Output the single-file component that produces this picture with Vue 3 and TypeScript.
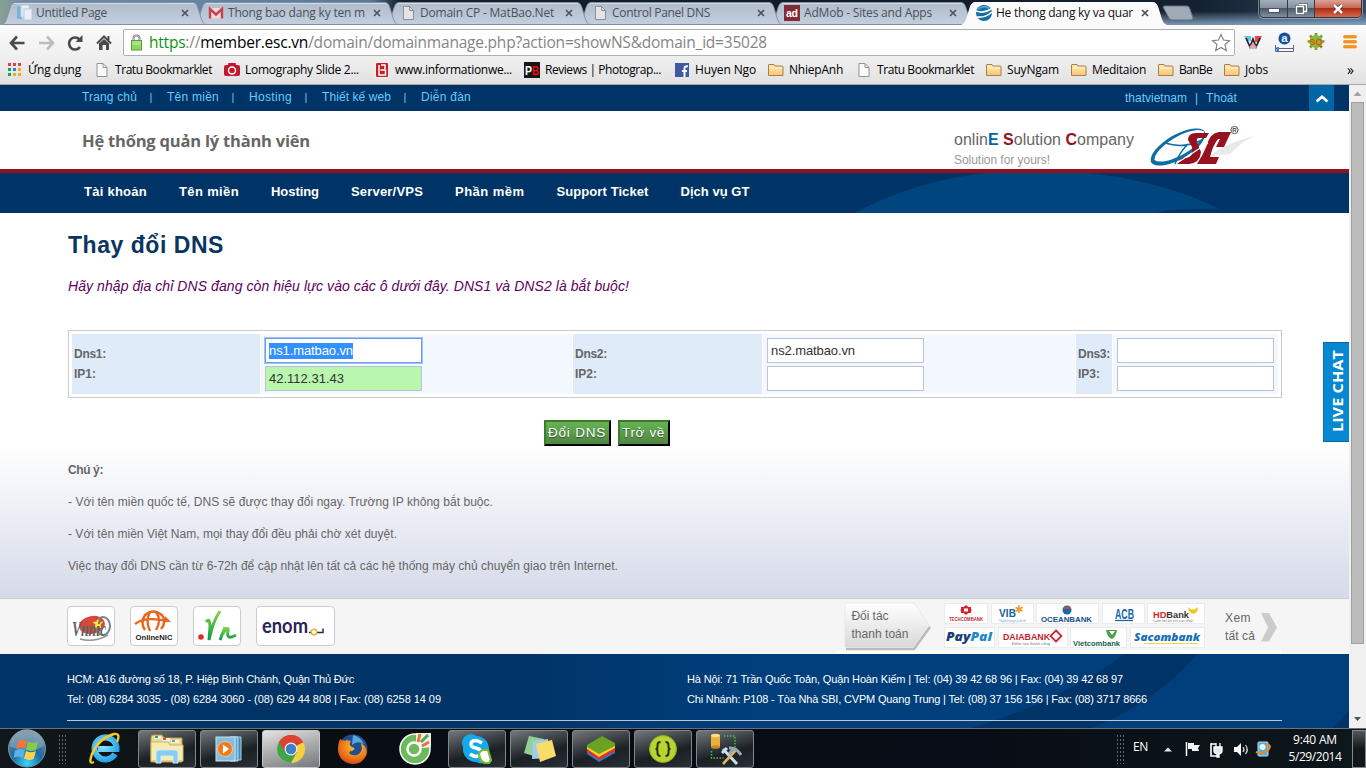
<script setup lang="ts">
import type { Directive } from 'vue'

interface Bookmark { icon: string; label: string; w: number; pad?: number }
interface Tab { icon: string; label: string; w: number; active?: boolean }
interface Link { label: string; w: number }

// Tracks a label out or in so that it fills the given width in pixels.
const vFit: Directive<HTMLElement, number> = {
  mounted(el, { value }) {
    const natural = el.getBoundingClientRect().width
    const count = (el.textContent ?? '').trim().length
    if (count > 1) el.style.letterSpacing = `${(value - natural) / count}px`
  },
}

const tabs: Tab[] = [
  { icon: 'pages', label: 'Untitled Page', w: 71 },
  { icon: 'gmail', label: 'Thong bao dang ky ten m', w: 137 },
  { icon: 'doc', label: 'Domain CP - MatBao.Net', w: 134 },
  { icon: 'doc', label: 'Control Panel DNS', w: 98 },
  { icon: 'ad', label: 'AdMob - Sites and Apps', w: 128 },
  { icon: 'globe', label: 'He thong dang ky va quar', w: 137, active: true },
]
const bookmarks: Bookmark[] = [
  { icon: 'apps', label: 'Ứng dụng', w: 53, pad: 1 },
  { icon: 'doc', label: 'Tratu Bookmarklet', w: 97 },
  { icon: 'camera', label: 'Lomography Slide 2...', w: 114, pad: 3 },
  { icon: 'redb', label: 'www.informationwe...', w: 117 },
  { icon: 'pb', label: 'Reviews | Photograp...', w: 116, pad: 1 },
  { icon: 'fb', label: 'Huyen Ngo', w: 61 },
  { icon: 'folder', label: 'NhiepAnh', w: 54, pad: 1 },
  { icon: 'doc', label: 'Tratu Bookmarklet', w: 97 },
  { icon: 'folder', label: 'SuyNgam', w: 52 },
  { icon: 'folder', label: 'Meditaion', w: 54 },
  { icon: 'folder', label: 'BanBe', w: 33 },
  { icon: 'folder', label: 'Jobs', w: 23 },
]
const topLinks: Link[] = [
  { label: 'Trang chủ', w: 55 },
  { label: 'Tên miền', w: 52 },
  { label: 'Hosting', w: 43 },
  { label: 'Thiết kế web', w: 69 },
  { label: 'Diễn đàn', w: 50 },
]
const nav: Link[] = [
  { label: 'Tài khoản', w: 63 },
  { label: 'Tên miền', w: 60 },
  { label: 'Hosting', w: 48 },
  { label: 'Server/VPS', w: 72 },
  { label: 'Phần mềm', w: 69.5 },
  { label: 'Support Ticket', w: 92 },
  { label: 'Dịch vụ GT', w: 69 },
]
const notes: Link[] = [
  { label: '- Với tên miền quốc tế, DNS sẽ được thay đổi ngay. Trường IP không bắt buộc.', w: 425 },
  { label: '- Với tên miền Việt Nam, mọi thay đổi đều phải chờ xét duyệt.', w: 329 },
  { label: 'Việc thay đổi DNS cần từ 6-72h để cập nhật lên tất cả các hệ thống máy chủ chuyển giao trên Internet.', w: 550 },
]
const tasks = ['start', 'ie', 'explorer', 'player', 'chrome', 'firefox', 'coccoc', 'skype', 'sticky', 'stacks', 'braces', 'tools']
const open = ['explorer', 'player', 'chrome', 'skype', 'sticky', 'stacks', 'braces', 'tools']
</script>

<template>
  <div class="screen">
    <svg class="defs" width="0" height="0">
      <defs>
        <linearGradient id="tabFill" x1="0" y1="0" x2="0" y2="1"><stop offset="0" stop-color="#b1bccb" /><stop offset="1" stop-color="#c3cfde" /></linearGradient>
        <linearGradient id="folderFill" x1="0" y1="0" x2="0" y2="1"><stop offset="0" stop-color="#ffeab8" /><stop offset="1" stop-color="#f7c672" /></linearGradient>
        <linearGradient id="leaf" x1="0" y1="0" x2="0" y2="1"><stop offset="0" stop-color="#8bd24a" /><stop offset="1" stop-color="#0d9b4b" /></linearGradient>
        <radialGradient id="orb" cx=".5" cy=".9" r=".8"><stop offset="0" stop-color="#38d6ff" /><stop offset=".5" stop-color="#1b6ba3" /><stop offset="1" stop-color="#6b8698" /></radialGradient>
        <radialGradient id="iefill" cx=".4" cy=".4" r=".7"><stop offset="0" stop-color="#8fe6ff" /><stop offset="1" stop-color="#25a5e6" /></radialGradient>
        <radialGradient id="ffox" cx=".6" cy=".3" r=".8"><stop offset="0" stop-color="#ffc928" /><stop offset=".6" stop-color="#ef7419" /><stop offset="1" stop-color="#c93a12" /></radialGradient>
        <linearGradient id="tagFill" x1="0" y1="0" x2="0" y2="1"><stop offset="0" stop-color="#ffffff" /><stop offset="1" stop-color="#d9d9d9" /></linearGradient>
      </defs>
    </svg>

    <!-- Tab strip -->
    <div class="strip">
      <div v-for="(t, i) in tabs" :key="t.label" class="tab" :class="{ active: t.active }" :style="{ zIndex: t.active ? 20 : 10 - i }">
        <svg class="tab-shape" width="204" height="25" viewBox="0 0 204 25">
          <path d="M0 24.5 C4 24 5 17 8 8 C9.5 3 11 2.5 14 2.5 H190 C193 2.5 194.5 3 196 8 C199 17 200 24 204 24.5Z" :fill="t.active ? '#fbfbfb' : 'url(#tabFill)'" :stroke="t.active ? '#fbfbfb' : '#8390a0'" />
          <path v-if="!t.active" d="M12 3.5 H192" stroke="#d3dce6" fill="none" />
        </svg>
        <div class="tab-body">
          <svg width="16" height="16" viewBox="0 0 16 16" class="tab-icon">
            <g v-if="t.icon === 'pages'"><rect x="1" y="1" width="5" height="13" fill="#7ab2dd" /><rect x="5" y="0" width="8" height="12" fill="#e4edf4" stroke="#c2d0dc" /><rect x="8" y="4" width="8" height="11" fill="#e9eff5" stroke="#bccad6" /></g>
            <g v-else-if="t.icon === 'gmail'"><rect x="1" y="3" width="14" height="10.500" fill="#ead9d9" /><path d="M2 13.500 V4 L8 9.500 L14 4 V13.500" fill="none" stroke="#c5434a" stroke-width="2.400" /></g>
            <g v-else-if="t.icon === 'doc'"><path d="M3.500 1.500 h6 l4 4 v9 h-10z" fill="#e2e4e8" stroke="#8c9199" /><path d="M9.500 1.500 v4 h4" fill="none" stroke="#8c9199" /></g>
            <g v-else-if="t.icon === 'ad'"><rect width="16" height="16" fill="#832a35" /><text x="8" y="12" text-anchor="middle" class="svg-b" font-size="10.500" textLength="12" fill="#fff">ad</text></g>
            <g v-else><circle cx="8" cy="8" r="8" fill="#176ea5" /><path d="M0 6 Q8 9 15 4 M1 12 Q9 13 16 7" stroke="#fff" stroke-width="1.600" fill="none" /><path d="M2 4 Q7 0 13 3" stroke="#4ba0cd" stroke-width="2" fill="none" /></g>
          </svg>
          <span class="tab-label"><span v-fit="t.w" class="fit">{{ t.label }}</span></span>
          <svg width="8" height="8" viewBox="0 0 8 8"><path d="M1 1 L7 7 M7 1 L1 7" stroke="#4d535b" stroke-width="1.700" /></svg>
        </div>
      </div>
      <svg class="newtab" width="32" height="16" viewBox="0 0 32 16"><path d="M2 1 H25 Q27 1 28 4 L31 13 Q31 15 29 15 H10 Q8 15 7 13 L1 2Z" fill="#a1abb8" stroke="#65707e" /></svg>
      <div class="winctl">
        <div class="wc min"><i class="bar"></i></div>
        <div class="wc"><svg width="13" height="12" viewBox="0 0 13 12"><path d="M4 1h7.500v7H9M1.500 3.500h7v7h-7z" fill="none" stroke="#444b57" stroke-width="2.600" /><path d="M4 1.500h7.500v7H9M1.500 3.500h7v7h-7z" fill="none" stroke="#fff" stroke-width="1.500" /></svg></div>
        <div class="wc close"><svg width="12" height="10" viewBox="0 0 12 10"><path d="M2 1 L10 9 M10 1 L2 9" stroke="#6b2a22" stroke-width="4" /><path d="M2 1 L10 9 M10 1 L2 9" stroke="#fff" stroke-width="2.500" /></svg></div>
      </div>
    </div>

    <!-- Toolbar -->
    <div class="toolbar">
      <svg width="105" height="18" viewBox="0 0 105 18" class="navicons">
        <path d="M9 2.500 L3 9 L9 15.500 M3 9 H16.500" stroke="#4a4a4a" stroke-width="2.600" fill="none" />
        <path d="M39 2.500 L45 9 L39 15.500 M45 9 H31" stroke="#bdbdbd" stroke-width="2.600" fill="none" />
        <path d="M72 12.500 A6 6 0 1 1 71.500 5" stroke="#4a4a4a" stroke-width="2.600" fill="none" transform="translate(0 .5)" /><path d="M74.500 1 V8 H67.500Z" fill="#4a4a4a" />
        <path d="M89 9.500 L96 2.500 L103 9.500 M100.500 6 V2" stroke="#4a4a4a" stroke-width="2" fill="none" /><path d="M91 9.500 L96 5 L101 9.500 V16 H98 V11 H94.500 V16 H91Z" fill="#4a4a4a" />
      </svg>
      <div class="omnibox">
        <svg width="13" height="17" viewBox="0 0 13 17"><path d="M3.500 8 V4.500 a3 3 0 0 1 6 0 V8" fill="none" stroke="#767676" stroke-width="2" /><path d="M3.500 8 V4.500 a3 3 0 0 1 6 0 V8" fill="none" stroke="#d9d9d9" stroke-width=".8" /><rect x="1.500" y="6.500" width="10" height="9.500" fill="#8ed760" stroke="#5c9a3c" /><path d="M2 8h9M2 10h9" stroke="#c0efa0" /></svg>
        <span v-fit="618" class="fit url"><em>https</em>://<b>member.esc.vn</b>/domain/domainmanage.php?action=showNS&amp;domain_id=35028</span>
        <svg class="star" width="20" height="19" viewBox="0 0 20 19"><path d="M10 1.500 L12.500 7 L18.500 7.600 L14 11.500 L15.300 17.500 L10 14.400 L4.700 17.500 L6 11.500 L1.500 7.600 L7.500 7Z" fill="#fff" stroke="#858585" stroke-width="1.200" /></svg>
      </div>
      <svg width="120" height="22" viewBox="0 0 120 22" class="exts">
        <path d="M2 5H9V10H5Z" fill="#62c5ee" /><path d="M13 5h7l-3 6h-4z" fill="#e04b55" /><path d="M4 7 L8 16 L11 8 L14 16 L18 7" fill="none" stroke="#272227" stroke-width="1.800" /><path d="M7 16l4 2.500 4-2.500-4-4z" fill="#e5a2ae" />
        <circle cx="42.500" cy="7.500" r="6" fill="#164f9c" /><text x="42.500" y="11" class="svg-b" font-size="11.500" text-anchor="middle" fill="#e6f2ff">a</text><path d="M33.500 14v6.500h18v-6.500M33.500 17.500h18" fill="#f4f7ff" stroke="#60646e" /><rect x="34.500" y="16" width="2.500" height="4" fill="#3c7df0" />
        <g stroke="#71a12e" stroke-width="2.600"><path d="M74 2v17M65.500 10.500h17M68 4.500l12 12M80 4.500l-12 12" /></g><circle cx="74" cy="10.500" r="6.500" fill="#86b93c" /><text x="74" y="14" class="svg-b" font-size="9.500" text-anchor="middle" fill="#e2550c">SQ</text>
        <g fill="#ff9617" stroke="#e67f00" stroke-width=".6"><rect x="101.500" y="4.500" width="13" height="2.500" rx="1" /><rect x="101.500" y="9.500" width="13" height="2.500" rx="1" /><rect x="101.500" y="14.500" width="13" height="2.500" rx="1" /></g>
      </svg>
    </div>

    <!-- Bookmarks -->
    <div class="bookmarks">
      <div v-for="(b, i) in bookmarks" :key="i" class="bm" :style="{ paddingRight: (b.pad ?? 0) + 'px' }">
        <svg width="16" height="16" viewBox="0 0 16 16">
          <g v-if="b.icon === 'apps'"><g fill="#e0443e"><rect x="1" y="1" width="3" height="3" /><rect x="6" y="1" width="3" height="3" /><rect x="11" y="1" width="3" height="3" /></g><g fill="#f1ac1c"><rect x="11" y="6" width="3" height="3" /><rect x="11" y="11" width="3" height="3" /><rect x="6" y="11" width="3" height="3" /></g><rect x="1" y="6" width="3" height="3" fill="#1d9f5b" /><rect x="6" y="6" width="3" height="3" fill="#2e7cf0" /><rect x="1" y="11" width="3" height="3" fill="#1d9f5b" /></g>
          <g v-else-if="b.icon === 'doc'"><path d="M3 1.500 h6 l4 4 v9 h-10z" fill="#fafafa" stroke="#939393" /><path d="M9 1.500 v4 h4" fill="none" stroke="#939393" /></g>
          <g v-else-if="b.icon === 'camera'"><rect x="0" y="3" width="16" height="11" rx="2" fill="#c4182f" /><rect x="4" y="1" width="8" height="4" rx="1" fill="#c4182f" /><circle cx="8" cy="8.500" r="3.500" fill="none" stroke="#fff" stroke-width="1.400" /></g>
          <g v-else-if="b.icon === 'redb'"><rect x="0" y="0" width="15" height="16" fill="#f6eeee" /><rect x="2" y="1" width="12" height="14" rx="1" fill="#c71f25" /><path d="M5 3 v10 h6.500 v-5 h-5 M7 3h4v4" stroke="#fff" stroke-width="1.500" fill="none" /></g>
          <g v-else-if="b.icon === 'pb'"><rect width="16" height="16" fill="#171717" /><text x="1" y="13" class="svg-b" font-size="12" textLength="7" lengthAdjust="spacingAndGlyphs" fill="#fff">P</text><text x="8" y="13" class="svg-b" font-size="12" textLength="7" lengthAdjust="spacingAndGlyphs" fill="#f00b12">B</text></g>
          <g v-else-if="b.icon === 'fb'"><rect x="1" y="1" width="14" height="14" fill="#4059a0" /><path d="M10.500 15 V9 H13 M8 9h4.500 M10.500 9 V6.500 Q10.500 4 14 4.300" stroke="#fff" stroke-width="2" fill="none" /></g>
          <g v-else><path d="M.5 13.500 V3 q0-.5.5-.5 h5 l1 1.500 h7 q1 0 1 1 v8.500z" fill="url(#folderFill)" stroke="#a87f48" /><path d="M1.500 6h12.500" stroke="#fff3cf" /></g>
        </svg>
        <span v-fit="b.w" class="fit">{{ b.label }}</span>
      </div>
      <span class="more">»</span>
    </div>

    <!-- Page -->
    <div class="viewport">
      <div class="page">
        <div class="topbar">
          <template v-for="(l, i) in topLinks" :key="l.label">
            <span v-if="i" class="sep">|</span><a v-fit="l.w" class="fit">{{ l.label }}</a>
          </template>
          <div class="account"><a v-fit="62" class="fit">thatvietnam</a><span>|</span><a v-fit="31" class="fit">Thoát</a></div>
          <div class="uptoggle"><svg width="14" height="9" viewBox="0 0 14 9"><path d="M1.500 7.500 L7 2.800 L12.500 7.500" stroke="#fff" stroke-width="2.800" fill="none" /></svg></div>
        </div>
        <header class="header">
          <div class="sitename"><span v-fit="228" class="fit">Hệ thống quản lý thành viên</span></div>
          <div class="company">
            <div class="cname"><span v-fit="180" class="fit">onlin<b class="blue">E</b> <b>S</b>olution <b>C</b>ompany</span></div>
            <div class="slogan"><span v-fit="96" class="fit">Solution for yours!</span></div>
          </div>
          <svg class="logo" width="110" height="46" viewBox="0 0 110 46">
            <path d="M52 40 Q68 22 104 13 L92 20 L80 31 L66 32 L58 41Z" fill="#e4e4e4" opacity=".8" />
            <path fill-rule="evenodd" d="M1.200 39.500 A31 13 -30 0 1 54.800 8.500 A31 13 -30 0 1 1.200 39.500Z M4.500 37 A29 11 -30 0 0 54.200 8.700 A29 11 -30 0 0 4.500 37Z" fill="#0d6da4" />
            <path d="M15 20 Q34 26 52 17 M38 21 Q29 30 25 41" fill="none" stroke="#0d6da4" stroke-width="1.500" />
            <path d="M59 10 H46 Q38 10 38 17 L42 24 Q44 34 36 35 H32 L27 41 H39 Q50 40 51 29 L47 19 Q46 15 49 15 H56Z" fill="#981120" />
            <path d="M81 9 H69 Q60 10 57 22 Q53 32 47 41 H66 L69 34 H60 Q63 22 68 16 H70 L66 24 H74Z" fill="#981120" />
            <path d="M27 40 L58 20" stroke="#fff" stroke-width="1.300" />
            <circle cx="84.500" cy="7" r="3.600" fill="#fff" stroke="#555" /><text x="84.500" y="9.300" font-size="6" text-anchor="middle" class="svg-b" fill="#444">R</text>
          </svg>
        </header>
        <nav class="mainnav">
          <svg class="swoosh" width="380" height="40" viewBox="0 0 380 40"><path d="M14 40 Q75 8 145 0 H250 Q325 9 380 36 Q340 35 312 40Z" fill="#00457d" /></svg>
          <a v-for="n in nav" :key="n.label" v-fit="n.w" class="fit">{{ n.label }}</a>
        </nav>

        <main class="content">
          <h1><span v-fit="156" class="fit">Thay đổi DNS</span></h1>
          <p class="hint"><span v-fit="561" class="fit">Hãy nhập địa chỉ DNS đang còn hiệu lực vào các ô dưới đây. DNS1 và DNS2 là bắt buộc!</span></p>
          <div class="dns">
            <div class="th"><span v-fit="32" class="fit">Dns1:</span><span v-fit="22" class="fit">IP1:</span></div>
            <div class="td"><div class="field focus"><span v-fit="84" class="fit sel">ns1.matbao.vn</span></div><div class="field green"><span v-fit="75" class="fit">42.112.31.43</span></div></div>
            <div class="th"><span v-fit="32" class="fit">Dns2:</span><span v-fit="22" class="fit">IP2:</span></div>
            <div class="td"><div class="field"><span v-fit="84" class="fit">ns2.matbao.vn</span></div><div class="field"></div></div>
            <div class="th"><span v-fit="32" class="fit">Dns3:</span><span v-fit="22" class="fit">IP3:</span></div>
            <div class="td"><div class="field"></div><div class="field"></div></div>
          </div>
          <div class="actions">
            <button class="change"><span v-fit="58" class="fit">Đổi DNS</span></button>
            <button class="back"><span v-fit="43" class="fit">Trở về</span></button>
          </div>
          <div class="notes">
            <p><b v-fit="35" class="fit">Chú ý:</b></p>
            <p v-for="n in notes" :key="n.w"><span v-fit="n.w" class="fit">{{ n.label }}</span></p>
          </div>
        </main>

        <section class="partners">
          <div class="card"><svg width="46" height="38" viewBox="0 0 46 38"><ellipse cx="24" cy="18" rx="13" ry="9" fill="#d9463a" transform="rotate(-10 24 18)" /><ellipse cx="35" cy="19" rx="7" ry="9" fill="none" stroke="#7d8285" stroke-width="2" /><path d="M30 12l1.500 3 4-.5-3 3 1 4-3.500-2-3.500 2 1-4-3-2.500 4-.5z" fill="#ffe63a" /><text x="4" y="29" class="script" font-size="20" textLength="34" lengthAdjust="spacingAndGlyphs" fill="#5c6664">Vnnic</text><path d="M12 32 Q26 36 40 28" stroke="#8f9297" stroke-width="1.500" fill="none" /></svg></div>
          <div class="card"><svg width="46" height="38" viewBox="0 0 46 38"><g fill="none" stroke="#ea661e" stroke-width="2.400"><path d="M31 8 Q22 1 14 8 Q9 16 14 23 M31 8 Q36 15 30 22" /><path d="M19 5 Q14 14 19 24 M25 5 Q31 13 25 23 M4 17 Q14 9 36 14" /></g><path d="M34 9l6 6h-7z" fill="#ea661e" /><text x="23" y="33" text-anchor="middle" class="svg-b" font-size="8" textLength="37" lengthAdjust="spacingAndGlyphs" fill="#222">OnlineNIC</text></svg></div>
          <div class="card"><svg width="46" height="38" viewBox="0 0 46 38"><g fill="none" stroke="url(#leaf)" stroke-width="3"><path d="M12 15 Q16 10 16 20 L15 33 Q19 14 26 4" /><path d="M26 33 L31 20 M27 29 Q35 17 34 24 Q32 34 42 28" /></g><circle cx="7" cy="30" r="2.800" fill="#e12c25" /></svg></div>
          <div class="card wide"><svg width="77" height="38" viewBox="0 0 77 38"><text x="5" y="26" class="enom" font-size="20" textLength="46" lengthAdjust="spacingAndGlyphs" fill="#27245a">enom</text><path d="M52 25.500h3M60 25.500h6v-4" stroke="#27245a" stroke-width="1.500" fill="none" /><circle cx="57" cy="25" r="2.800" fill="#fff" stroke="#e2b52f" stroke-width="1.500" /></svg></div>
          <svg class="tag" width="90" height="49" viewBox="0 0 90 49"><path d="M2 47 H70 L86 25" stroke="#aaa" stroke-width="2.500" fill="none" opacity=".8" /><path d="M1 1 H70 L85 23 L70 45 H1Z" fill="url(#tagFill)" stroke="#ddd" stroke-width=".6" /><text x="7.500" y="18" class="svg-r" font-size="12" textLength="37" fill="#666">Đối tác</text><text x="7.500" y="36" class="svg-r" font-size="12" textLength="57" fill="#666">thanh toán</text></svg>
          <div class="banks">
            <svg width="44" height="21" viewBox="0 0 44 21"><rect x=".5" y=".5" width="43" height="20" class="frame" /><path d="M22 2l6 5-6 5-6-5z" fill="#d52329" /><path d="M17 4h3.500v6H17z M23.500 4H27v6h-3.500z" fill="#d52329" /><rect x="20" y="5.500" width="4" height="3" fill="#fff" /><text x="5" y="18" class="svg-b" font-size="5" textLength="34" lengthAdjust="spacingAndGlyphs" fill="#c62b30">TECHCOMBANK</text></svg>
            <svg width="43" height="21" viewBox="0 0 43 21"><rect x=".5" y=".5" width="42" height="20" class="frame" /><text x="8" y="14" class="svg-b" font-size="10" textLength="17" fill="#1760a5">VIB</text><path d="M28 2v8M24.500 4.500l7 3.500M31.500 4l-7 4.500" stroke="#f39a25" stroke-width="1.600" /><text x="8" y="18.500" class="svg-r" font-size="4" textLength="27" fill="#8bb8d5">Ngân hàng Quốc tế</text></svg>
            <svg width="63" height="21" viewBox="0 0 63 21"><rect x=".5" y=".5" width="62" height="20" class="frame" /><circle cx="31" cy="7" r="4.500" fill="#1269ad" /><path d="M27 6a4.500 4.500 0 0 1 8 0z" fill="#e2422c" /><text x="5" y="19" class="svg-b" font-size="6.500" textLength="51" lengthAdjust="spacingAndGlyphs" fill="#14508e">OCEANBANK</text></svg>
            <svg width="43" height="21" viewBox="0 0 43 21"><rect x=".5" y=".5" width="42" height="20" class="frame" /><text x="13" y="15.500" class="svg-b" font-size="14" textLength="19" lengthAdjust="spacingAndGlyphs" fill="#1664a8">ACB</text><path d="M13 17.500h18" stroke="#1664a8" stroke-width="1.300" /></svg>
            <svg width="58" height="21" viewBox="0 0 58 21"><rect x=".5" y=".5" width="57" height="20" class="frame" /><text x="6" y="14.500" class="svg-b" font-size="9.500" textLength="36" lengthAdjust="spacingAndGlyphs" fill="#333"><tspan fill="#d22a2c">HD</tspan>Bank</text><path d="M41 4 Q46 9 51 4 Q51 10 46 11 Q42 10 41 4Z" fill="#f6c620" /><text x="6" y="18.500" class="svg-r" font-size="4" textLength="40" fill="#888">Cam kết lợi ích cao nhất</text></svg>
            <svg width="51" height="21" viewBox="0 0 51 21"><rect x=".5" y=".5" width="50" height="20" class="frame" /><text x="2" y="14" class="svg-bi" font-size="13" textLength="46" lengthAdjust="spacingAndGlyphs" fill="#1a3e78">Pay<tspan fill="#1b8ac7">Pal</tspan></text></svg>
            <svg width="70" height="21" viewBox="0 0 70 21"><rect x=".5" y=".5" width="69" height="20" class="frame" /><text x="5" y="13" class="svg-b" font-size="9.500" textLength="47" lengthAdjust="spacingAndGlyphs" fill="#bd252d">DAIABANK</text><path d="M58 3.500l5.500 5.500-5.500 5.500-5.500-5.500z" fill="none" stroke="#d4252c" stroke-width="1.800" /><text x="14" y="18" class="svg-r" font-size="4" textLength="38" fill="#777">Điểm tựa thành công</text></svg>
            <svg width="57" height="21" viewBox="0 0 57 21"><rect x=".5" y=".5" width="56" height="20" class="frame" /><path d="M36 3h11q-1 7-5 9-5-2-6-9z" fill="#48a14b" /><path d="M39 4l3 4 3-4z" fill="#fff" /><text x="3" y="18.500" class="svg-b" font-size="8" textLength="47" lengthAdjust="spacingAndGlyphs" fill="#1c5e48">Vietcombank</text></svg>
            <svg width="75" height="21" viewBox="0 0 75 21"><rect x=".5" y=".5" width="74" height="20" class="frame" /><text x="4" y="14" class="svg-bi" font-size="11" textLength="66" lengthAdjust="spacingAndGlyphs" fill="#1870b8">Sacombank</text><path d="M14 16.500h54" stroke="#f2d936" /></svg>
          </div>
          <div class="all"><span v-fit="26" class="fit">Xem</span><span v-fit="30" class="fit">tất cả</span></div>
          <svg class="chev" width="17" height="29" viewBox="0 0 17 29"><path d="M0 0 H8 L16 14.500 L8 28.500 H0 L7 14.500Z" fill="#cbcbcb" /></svg>
        </section>

        <footer class="footer">
          <svg class="foot-bg" width="780" height="74" viewBox="0 0 780 74"><path d="M556 0 Q490 48 402 74 H522 Q585 50 628 0Z M780 57 Q772 66 764 74 H780Z" fill="#003366" /></svg>
          <div class="addr">
            <div><span v-fit="287" class="fit">HCM: A16 đường số 18, P. Hiệp Bình Chánh, Quận Thủ Đức</span></div>
            <div><span v-fit="374" class="fit">Tel: (08) 6284 3035 - (08) 6284 3060 - (08) 629 44 808 | Fax: (08) 6258 14 09</span></div>
          </div>
          <div class="addr">
            <div><span v-fit="436" class="fit">Hà Nội: 71 Trần Quốc Toản, Quận Hoàn Kiếm | Tel: (04) 39 42 68 96 | Fax: (04) 39 42 68 97</span></div>
            <div><span v-fit="460" class="fit">Chi Nhánh: P108 - Tòa Nhà SBI, CVPM Quang Trung | Tel: (08) 37 156 156 | Fax: (08) 3717 8666</span></div>
          </div>
        </footer>
        <svg class="livechat" width="26" height="100" viewBox="0 0 26 100"><rect width="26" height="100" fill="#0b6ba6" /><rect x="1" y="1" width="25" height="98" fill="#0588d1" /><text transform="translate(20 90) rotate(-90)" class="segoe" font-size="15" font-weight="700" textLength="82" lengthAdjust="spacingAndGlyphs" fill="#fff">LIVE CHAT</text></svg>
      </div>
      <div class="scroll">
        <svg width="17" height="17" viewBox="0 0 17 17"><path d="M4.500 11 L8.500 6.500 L12.500 11Z" fill="#a3a3a3" /></svg>
        <div class="thumb"></div>
        <svg width="17" height="17" viewBox="0 0 17 17" class="down"><path d="M5 6 h7 L8.500 10Z" fill="#505050" /></svg>
      </div>
    </div>

    <!-- Taskbar -->
    <div class="taskbar">
      <template v-for="t in tasks" :key="t">
        <div class="task" :class="[t, { open: open.includes(t) }]">
          <svg v-if="t === 'start'" width="40" height="39" viewBox="0 0 40 39"><circle cx="20" cy="19.500" r="18.500" fill="url(#orb)" stroke="#7598a9" /><path d="M3 17 A17 17 0 0 1 37 17 Q20 26 3 17" fill="#c3dbe8" opacity=".3" /><path d="M11 12 Q15 9 20 12 L18 20 Q13 17 9 20Z" fill="#f0763b" /><path d="M21 12.500 Q26 15 31 12.500 L29 21 Q24 23 19 20.500Z" fill="#8ac943" /><path d="M8 21.500 Q13 18.500 18 21.500 L16 29 Q11 26 6.500 29Z" fill="#58b4e8" /><path d="M19 22 Q24 24.500 29 22 L26.500 30 Q22 32 17 29.500Z" fill="#fdd447" /></svg>
          <svg v-else-if="t === 'ie'" width="32" height="34" viewBox="0 0 32 34"><path d="M26 22 A11 11 0 1 1 27.500 17 H9" fill="none" stroke="url(#iefill)" stroke-width="6" /><path d="M5 30 Q-1 33 3 22 Q10 6 25 2 Q32 1 28 10" fill="none" stroke="#f7c72b" stroke-width="2.400" /></svg>
          <svg v-else-if="t === 'explorer'" width="34" height="32" viewBox="0 0 34 32"><path d="M1 5 q0-3 2-3h9l2 3h18v24H1z" fill="#ecd993" stroke="#ba9a4b" /><path d="M4 3h7v3H4z" fill="#f5f2d8" /><path d="M5 3h3v2H5z" fill="#1eb346" /><path d="M12 5h8v3h-8z" fill="#f5f2d8" /><path d="M13 5h3v2h-3z" fill="#d95041" /><path d="M21 7h8v3h-8z" fill="#f5f2d8" /><path d="M22 7h3v2h-3z" fill="#47a2df" /><path d="M1 9h17l2 3h13v16H1z" fill="#f7ebb2" stroke="#d0b469" /><path d="M6 30V20q0-3 3-3h16q3 0 3 3v10h-5v-7H11v7z" fill="#89cbee" stroke="#c6ecff" /></svg>
          <svg v-else-if="t === 'player'" width="28" height="28" viewBox="0 0 28 28"><path d="M19 2h7v23h-7z" fill="#4287b5" stroke="#a7d5ed" /><path d="M15 2h8v24h-8z" fill="#66a7cf" stroke="#b4ddf0" /><rect x="1" y="2" width="19" height="24" fill="#86bddd" stroke="#c8e6f4" /><circle cx="10" cy="14" r="7.500" fill="#ee7b1c" stroke="#f9c194" /><path d="M8 9.500v9l6-4.500z" fill="#fff" /></svg>
          <svg v-else-if="t === 'chrome'" width="30" height="30" viewBox="0 0 30 30"><circle cx="15" cy="15" r="14" fill="#f7d13c" /><path d="M15 15 L2.900 8 A14 14 0 0 1 27.100 8 Z" fill="#d93a2e" /><path d="M15 15 L2.900 8 A14 14 0 0 0 15 29 L21 18Z" fill="#3fa54b" /><path d="M15 8.500 H27.500 A14 14 0 0 0 3 8 L9 18Z" fill="#de4234" /><circle cx="15" cy="15" r="6.500" fill="#eee" /><circle cx="15" cy="15" r="5.200" fill="#3d7fc9" /></svg>
          <svg v-else-if="t === 'firefox'" width="32" height="32" viewBox="0 0 32 32"><circle cx="16" cy="16" r="14.500" fill="#1e4f92" /><path d="M16 2 Q24 4 27 11 Q20 7 15 12z" fill="#54a9da" /><path d="M3 6 Q7 9 10 7 L14 8 Q11 12 15 14 Q20 15 15 18 Q11 18 13 21 Q22 25 25 16 L24 10 Q32 15 29 23 Q24 32 15 31 Q2 29 1 17 Q1 10 3 6Z" fill="url(#ffox)" /></svg>
          <svg v-else-if="t === 'coccoc'" width="32" height="32" viewBox="0 0 32 32"><circle cx="16" cy="16" r="15" fill="#6cba5b" stroke="#fff" stroke-width="1.500" /><path d="M17 16 L17 0 H32 V14Z" fill="#edf2e9" /><path d="M19 9l2-8 M23 13l7-4" stroke="#ee7136" stroke-width="3" /><path d="M22 9l7-7" stroke="#54a650" stroke-width="3" /><circle cx="15" cy="16" r="6.500" fill="#6cba5b" stroke="#fff" stroke-width="2.500" /></svg>
          <svg v-else-if="t === 'skype'" width="32" height="32" viewBox="0 0 32 32"><circle cx="10" cy="10" r="9" fill="#16a9e8" /><circle cx="15" cy="16" r="13" fill="#16a9e8" /><circle cx="20" cy="22" r="8.500" fill="#16a9e8" /><path d="M21 10 Q13 5 10 10 Q9 14 15 15 Q22 17 20 21 Q16 26 9 21" stroke="#fff" stroke-width="3.400" fill="none" /><path d="M18 21 q1-4 5-4 h4 l3 10-2 3h-4 q-5-1-6-9z" fill="#fff" stroke="#78ba32" stroke-width="2.200" /></svg>
          <svg v-else-if="t === 'sticky'" width="33" height="28" viewBox="0 0 33 28"><path d="M6 1 l15 3-4 19-16-5z" fill="#91d191" /><path d="M10 6l15-2 2 19-18 1z" fill="#a3cbed" /><path d="M13 9l16-4 4 16-16 6z" fill="#f8dc68" /></svg>
          <svg v-else-if="t === 'stacks'" width="32" height="28" viewBox="0 0 32 28"><path d="M2 15l12 7 16-9v5l-16 9-12-8z" fill="#247cce" /><path d="M2 14l12 7 16-9v4l-16 9-12-8z" fill="#e02d2d" /><path d="M2 11l12 7 16-9v4l-16 9-12-8z" fill="#f7cf25" /><path d="M2 10l15-9 13 7v3l-16 8-12-7z" fill="#68a422" /></svg>
          <svg v-else-if="t === 'braces'" width="30" height="30" viewBox="0 0 30 30"><circle cx="15" cy="15" r="13.500" fill="#b7d432" stroke="#8aad1c" /><path d="M12.500 8 q-3 0-3 3v2q0 2-2 2 2 0 2 2v2q0 3 3 3M17.500 8q3 0 3 3v2q0 2 2 2-2 0-2 2v2q0 3-3 3" stroke="#26300d" stroke-width="2" fill="none" /></svg>
          <svg v-else width="34" height="34" viewBox="0 0 34 34"><rect x="3" y="3" width="9" height="12" fill="#e9b13c" /><ellipse cx="7.500" cy="3.500" rx="4.500" ry="1.800" fill="#ffdf85" /><ellipse cx="7.500" cy="15" rx="4.500" ry="1.800" fill="#c78b26" /><path d="M16 4h11v12M3.500 19v7h12" stroke="#43c33c" stroke-width="1.500" stroke-dasharray="1.500 1.500" fill="none" /><path d="M15 17l14 15M14 21l5-5" stroke="#cfdce9" stroke-width="3" /><path d="M28 18L15 32" stroke="#deb465" stroke-width="2.600" /><path d="M21 16q7-1 12 7M26 16l-5 6" stroke="#92a6bc" stroke-width="3" fill="none" /></svg>
        </div>
        <div v-if="t === 'start'" class="grip"></div>
      </template>
      <div class="tray">
        <div class="grip"></div>
        <span v-fit="15" class="fit en">EN</span>
        <svg width="112" height="20" viewBox="0 0 112 20">
          <path d="M4 12.500h8L8 8.500z" fill="#e6e6e6" />
          <path d="M26.500 3v14" stroke="#fff" stroke-width="1.500" /><path d="M28 4h6v2h6l-2 3 1 3h-7v-2h-4z" fill="#f3f3f3" />
          <path d="M52 5h-1v12h8" stroke="#fff" stroke-width="1.600" fill="none" /><path d="M51 5h5M54 8h8v4q0 2-3 3v3h-2v-3q-3-1-3-3zM56 4v4M60 4v4" stroke="#fff" stroke-width="1.300" fill="#e6e6e6" />
          <path d="M74 8h3l4-4v13l-4-4h-3z" fill="#fff" /><path d="M83 8q2 2.500 0 5M85.500 6q3.500 4.500 0 9" stroke="#ddd" stroke-width="1.200" fill="none" />
          <rect x="98" y="3" width="10" height="14" rx="1" fill="#4daee0" stroke="#b9e2f7" /><circle cx="102.500" cy="8" r="3" fill="#e6f7ff" /><path d="M96 13q7 3 13-3 3-5-4-4" stroke="#e68a2e" stroke-width="2" fill="none" />
        </svg>
        <div class="clock"><span v-fit="44" class="fit">9:40 AM</span><span v-fit="53" class="fit">5/29/2014</span></div>
        <div class="desk"></div>
      </div>
    </div>
  </div>
</template>

<style>
html, body { margin: 0; overflow: hidden; }
</style>

<style scoped>
* { box-sizing: border-box; }
.screen { width: 1366px; height: 768px; overflow: hidden; display: flex; flex-direction: column; font-family: "Liberation Sans", Arial, sans-serif; background: #fff; }
.defs { position: absolute; }
svg { flex: none; display: block; }
.fit { display: inline-block; white-space: nowrap; flex: none; }
.svg-b { font-family: "Liberation Sans", sans-serif; font-weight: 700; }
.svg-r { font-family: "Liberation Sans", sans-serif; }
.svg-bi { font-family: "Open Sans", sans-serif; font-weight: 800; font-style: italic; }
.script { font-family: "Liberation Serif", serif; font-style: italic; font-weight: 700; }
.enom { font-family: Lato, sans-serif; font-weight: 700; }
.segoe { font-family: "Open Sans", sans-serif; }

.strip { height: 25px; flex: none; display: flex; padding-left: 2px; background: linear-gradient(180deg, rgba(150, 182, 216, 0) 45%, rgba(150, 182, 216, .75) 96%) 1150px 0 / 216px 25px no-repeat, linear-gradient(90deg, #87a194 0, #6f8da9 25px, #5a7a9d 370px, #14202d 400px, #101b29 800px, #142130 1200px, #34495f 1366px); }
.tab { position: relative; width: 204px; height: 25px; margin-right: -12px; flex: none; }
.tab-shape { position: absolute; left: 0; top: 0; }
.tab-body { position: relative; display: flex; align-items: center; height: 25px; padding: 1px 0 0 14px; font: 12px/16px "Open Sans", sans-serif; color: #4a5058; }
.tab-label { width: 143px; margin-left: 4px; }
.tab-body > svg:last-child { margin-left: 2px; }
.tab.active .tab-body { color: #111; }
.newtab { margin: 5px 0 0 8px; }
.winctl { margin-left: auto; margin-right: 4px; width: 103px; height: 18px; display: flex; border: 1px solid #2c3540; border-top: 0; border-radius: 0 0 5px 5px; overflow: hidden; box-shadow: 0 0 0 1px rgba(200, 215, 230, .5); }
.wc { width: 27px; display: flex; align-items: center; justify-content: center; border-right: 1px solid #333d49; background: linear-gradient(#a4afbb 0, #8592a1 45%, #4b5968 50%, #8091a3 100%); }
.wc.min { width: 28px; }
.wc.close { flex: 1; border: 0; background: linear-gradient(#dda294 0, #c56957 45%, #ad2c18 50%, #d7694b 100%); }
.bar { width: 12px; height: 5px; margin-top: 4px; background: #fff; border: 1px solid #4c5461; }

.toolbar { height: 33px; flex: none; display: flex; align-items: center; background: linear-gradient(#fbfbfb, #efefef); padding-left: 8px; }
.navicons { margin-top: 2px; }
.omnibox { width: 1112px; height: 27px; margin: 1px 0 0 10px; border: 1px solid #b0b0b0; border-radius: 2px; background: #fff; display: flex; align-items: center; padding: 0 3px 0 6px; }
.url { margin-left: 6px; font: 15.500px/22px "Open Sans", sans-serif; color: #858585; }
.url em { font-style: normal; color: #0b9311; }
.url b { font-weight: 400; color: #000; }
.star { margin-left: auto; }
.exts { margin-left: 7px; }

.bookmarks { height: 27px; flex: none; background: linear-gradient(#efefef, #e1e1e1); border-bottom: 1px solid #a6a6a6; display: flex; align-items: center; gap: 12px; padding: 0 12px 2px 7px; font: 12px/16px "Open Sans", sans-serif; color: #000; }
.bm { display: flex; align-items: center; gap: 5px; flex: none; }
.more { margin-left: auto; font-size: 14px; }

.viewport { height: 643px; flex: none; display: flex; }
.page { position: relative; width: 1349px; height: 643px; display: flex; flex-direction: column; background: #fff; }
.topbar { height: 26px; flex: none; background: #003366; color: #66ccff; font-size: 12px; line-height: 24px; display: flex; padding-left: 82px; }
.sep { width: 30px; text-align: center; font-size: 11px; padding-right: 2px; }
.account { margin-left: auto; display: flex; padding-top: 1px; }
.account span { width: 19px; text-align: center; }
.uptoggle { width: 25px; height: 26px; margin: 0 15px 0 72px; background: #0066a6; display: flex; align-items: center; justify-content: center; }
.header { height: 58px; flex: none; display: flex; padding-left: 82px; }
.sitename { width: 872px; padding-top: 19px; font: 700 16.500px/22px "Open Sans", sans-serif; color: #666; }
.company { width: 188px; padding-top: 18px; }
.cname { font-size: 16px; line-height: 22px; color: #666; height: 23px; }
.cname b { color: #981120; }
.cname .blue { color: #00669c; }
.slogan { font-size: 12px; line-height: 16px; color: #999; }
.logo { margin: 12px 0 0 8px; }
.mainnav { position: relative; height: 44px; flex: none; border-top: 4px solid #92121e; background: #003366; display: flex; gap: 32px; padding: 0 0 4px 84px; color: #fff; font-size: 13px; font-weight: 700; line-height: 37px; }
.swoosh { position: absolute; left: 840px; top: 0; }

.content { height: 385px; flex: none; padding: 0 67px 0 68px; background: linear-gradient(#fff 0, #fff 232px, #d5dae9 385px); color: #666; }
h1 { margin: 0; padding-top: 18px; font-size: 23px; line-height: 28px; color: #0a3563; height: 46px; }
.hint { margin: 0; padding-top: 18px; height: 71px; font-size: 14px; line-height: 18px; font-style: italic; color: #600060; }
.dns { width: 1214px; height: 68px; border: 1px solid #ccc; padding: 3px; display: grid; grid-template-columns: 188px 311px 189px 312px 36px 165px; column-gap: 1px; background: #fff; }
.th { background: #e0ebf9; display: flex; flex-direction: column; align-items: flex-start; padding: 10px 0 0 2px; font-size: 12px; font-weight: 700; line-height: 20px; }
.td { background: #f3f7fe; padding: 4px 0 0 4px; display: flex; flex-direction: column; gap: 3px; }
.field { width: 157px; height: 25px; border: 1px solid #bac2d8; background: #fff; padding: 4px 3px; font-size: 13px; line-height: 16px; color: #333; }
.field.focus { border-color: #6b9ae8; box-shadow: 0 0 0 1px #a6c3f5; }
.field.green { background: #b9f6ae; }
.sel { background: #3390ff; color: #fff; }
.actions { display: flex; gap: 7px; padding: 22px 0 0 476px; }
.actions button { height: 26px; padding: 0; border: 2px solid; border-color: #3e7c2b #000 #000 #3e7c2b; background: linear-gradient(#66b354, #4d8741); color: #fff; font: 13.500px/20px "Liberation Sans", Arial, sans-serif; text-shadow: 0 1px 1px #3a4a36; text-align: left; padding-left: 2px; }
.change { width: 67px; }
.back { width: 52px; }
.notes { padding-top: 16px; font-size: 12px; line-height: 16px; }
.notes p { margin: 0 0 16px; height: 16px; }

.partners { position: relative; height: 56px; flex: none; background: #f5f5f5; border-top: 1px solid #ccc; display: flex; padding-left: 67px; }
.partners::after { content: ""; position: absolute; left: 837px; bottom: 0; width: 445px; height: 4px; background: #fff; }
.card { width: 48px; height: 40px; margin: 7px 15px 0 0; border: 1px solid #ccc; border-radius: 4px; background: #fff; flex: none; }
.card.wide { width: 79px; }
.tag { position: relative; z-index: 1; margin: 3px 10px 0 494px; }
.banks { width: 264px; display: flex; flex-wrap: wrap; align-content: flex-start; gap: 3px 2.500px; padding-top: 4px; flex: none; margin-right: 17px; }
.frame { fill: #fff; stroke: #ebebeb; }
.all { width: 37px; padding-top: 10px; display: flex; flex-direction: column; align-items: flex-start; font-size: 12px; line-height: 18px; color: #666; }
.chev { margin-top: 14px; margin-left: -1px; }

.footer { position: relative; height: 74px; flex: none; overflow: hidden; background: linear-gradient(90deg, #003366 500px, #003f7c 760px); color: #fff; font-size: 11px; line-height: 20px; display: flex; margin: 0; padding: 15px 67px 0; }
.footer::after { content: ""; position: absolute; left: 67px; top: 66px; width: 1215px; height: 1px; background: #b9c5d2; }
.foot-bg { position: absolute; right: 0; top: 0; width: 780px; }
.addr { position: relative; width: 620px; flex: none; }
.livechat { position: absolute; right: 0; top: 257px; }
.scroll { width: 17px; height: 643px; background: #f0f0f0; display: flex; flex-direction: column; }
.thumb { width: 13px; height: 542px; margin-left: 2px; background: #bcbcbc; border: 1px solid #a0a0a0; }
.down { margin-top: auto; }

.taskbar { height: 40px; flex: none; display: flex; align-items: center; background: linear-gradient(90deg, #11171a, #080e12 20%, #080c16 70%, #0e171b); border-top: 1px solid #68727a; }
.task { width: 58px; height: 38px; margin-right: 4px; display: flex; align-items: center; justify-content: center; flex: none; }
.task.start { width: 40px; margin: 0 11px 0 7px; }
.task.ie { margin: 0 4px 0 10px; }
.task.open { border: 1px solid #81868b; border-radius: 3px; background: linear-gradient(165deg, #73787c 0, #3e4348 35%, #1b2025 60%, #2a2f35 100%); }
.task.open.chrome { background: linear-gradient(165deg, #e2e3e4, #a9abac 50%, #75787a); border-color: #c5c8ca; }
.grip { width: 8px; height: 30px; background: radial-gradient(circle, #62696e 0 .7px, transparent 1px) 0 0 / 3px 4px; flex: none; }
.tray { margin-left: auto; display: flex; align-items: center; height: 100%; color: #fff; font: 12px/16px "Open Sans", sans-serif; }
.en { margin: -4px 12px 0 9px; }
.clock { width: 62px; margin: 0 6px 0 12px; display: flex; flex-direction: column; align-items: center; line-height: 16.500px; }
.desk { width: 14px; height: 38px; border: 1px solid #83888b; background: linear-gradient(#52575a, #11171a 50%); }
</style>
